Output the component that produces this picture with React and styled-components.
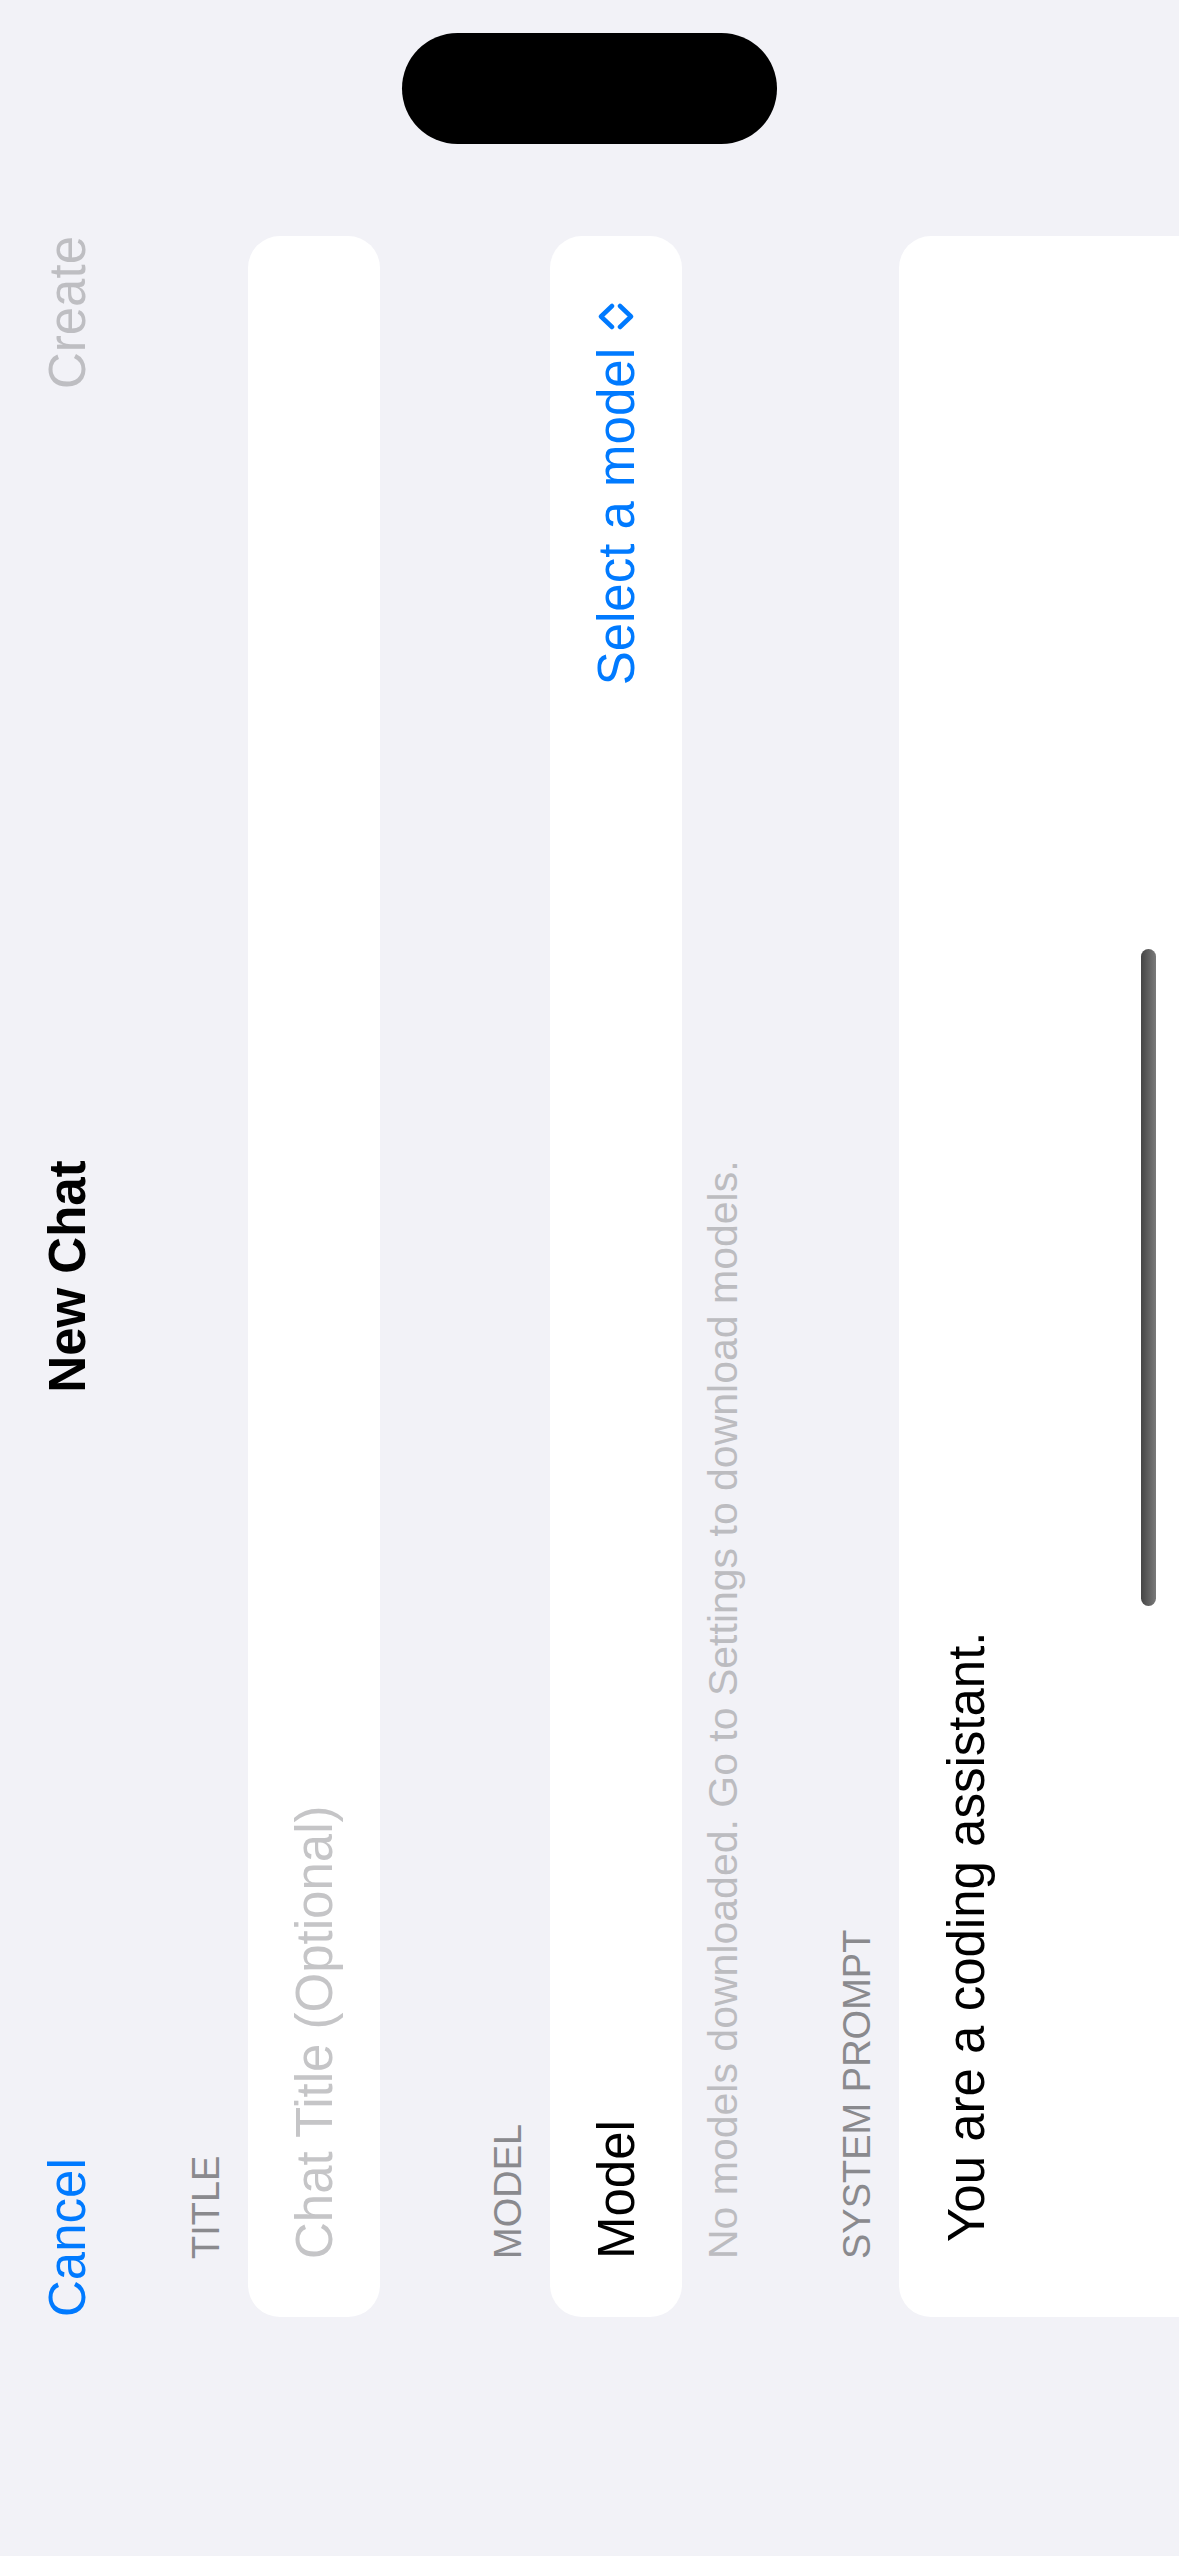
import React from 'react';
import styled, { createGlobalStyle } from 'styled-components';

const GlobalStyle = createGlobalStyle`
  html, body {
    margin: 0;
    padding: 0;
    background: #f2f2f7;
  }
  * { box-sizing: border-box; }
`;

const Device = styled.div`
  position: relative;
  width: 1179px;
  height: 2556px;
  overflow: hidden;
  background: #f2f2f7;
  font-family: "Liberation Sans", Arial, sans-serif;
`;

// the app is drawn in landscape and turned onto the portrait screen
const Screen = styled.div`
  position: absolute;
  top: 0;
  left: 0;
  width: 2556px;
  height: 1179px;
  transform-origin: 0 0;
  transform: translateY(2556px) rotate(-90deg);
  display: flex;
  flex-direction: column;
  padding: 0 236px 0 239px;
  overflow: hidden;

  & > * {
    flex-shrink: 0;
  }
`;

const Island = styled.div`
  position: absolute;
  top: 33px;
  left: 402px;
  width: 375px;
  height: 111px;
  border-radius: 56px;
  background: #000;
`;

const NavBar = styled.div`
  height: 134px;
  display: grid;
  grid-template-columns: 1fr auto 1fr;
  align-items: center;
  font-size: 51px;
  line-height: 61px;
`;

const NavButton = styled.span`
  color: ${p => (p.$disabled ? '#bebec2' : '#007aff')};
  justify-self: ${p => (p.$end ? 'end' : 'start')};
`;

const NavTitle = styled.span`
  font-weight: 700;
  color: #000;
`;

const Section = styled.section`
  display: flex;
  flex-direction: column;
  margin-top: ${p => p.$top}px;
`;

const Label = styled.div`
  font-size: 38px;
  line-height: 46px;
  color: #8a8a8e;
  text-transform: uppercase;
  padding-left: 58px;
  margin-bottom: 19px;
`;

const Footer = styled.div`
  font-size: 41px;
  line-height: 48px;
  color: #bcbcc0;
  padding-left: 58px;
  margin-top: 17px;
`;

const Card = styled.div`
  position: relative;
  background: #fff;
  border-radius: 32px;
  min-height: ${p => p.$height || 132}px;
  display: flex;
  align-items: ${p => (p.$top ? 'flex-start' : 'center')};
  justify-content: space-between;
  padding: ${p => (p.$top ? '37px 58px 0 75px' : '0 67px 0 58px')};
  font-size: 51px;
  line-height: 61px;
`;

const Placeholder = styled.span`
  color: #c5c5c7;
`;

const RowText = styled.span`
  color: #000;
`;

const Picker = styled.span`
  display: flex;
  align-items: center;
  gap: 18px;
  color: #007aff;
`;

const ScrollThumb = styled.div`
  position: absolute;
  left: 711px;
  top: 242px;
  width: 657px;
  height: 15px;
  border-radius: 8px;
  background: linear-gradient(to bottom, #454545, #7a7a7a);
`;

const UpDown = () => (
  <svg width="27" height="38" viewBox="0 0 27 38" fill="none">
    <path
      d="M3 15 L13.5 4 L24 15 M3 23 L13.5 34 L24 23"
      stroke="#007aff"
      strokeWidth="4.5"
      strokeLinecap="round"
      strokeLinejoin="round"
    />
  </svg>
);

export default function App() {
  return (
    <>
      <GlobalStyle />
      <Device>
        <Screen>
          <NavBar>
            <NavButton>Cancel</NavButton>
            <NavTitle>New Chat</NavTitle>
            <NavButton $end $disabled>Create</NavButton>
          </NavBar>

          <Section $top={49}>
            <Label>Title</Label>
            <Card>
              <Placeholder>Chat Title (Optional)</Placeholder>
            </Card>
          </Section>

          <Section $top={105}>
            <Label>Model</Label>
            <Card>
              <RowText>Model</RowText>
              <Picker>
                Select a model
                <UpDown />
              </Picker>
            </Card>
            <Footer>No models downloaded. Go to Settings to download models.</Footer>
          </Section>

          <Section $top={87}>
            <Label>System Prompt</Label>
            <Card $top $height={420}>
              <RowText>You are a coding assistant.</RowText>
              <ScrollThumb />
            </Card>
          </Section>
        </Screen>
        <Island />
      </Device>
    </>
  );
}
